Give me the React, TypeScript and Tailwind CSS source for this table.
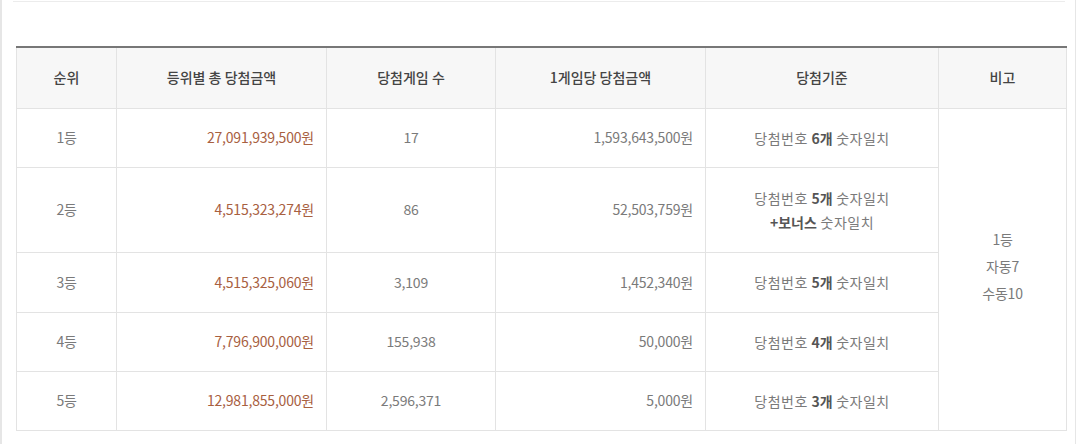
const rows = [
  { rank: "1등", total: "27,091,939,500원", games: "17", per: "1,593,643,500원", n: "6", bonus: false },
  { rank: "2등", total: "4,515,323,274원", games: "86", per: "52,503,759원", n: "5", bonus: true },
  { rank: "3등", total: "4,515,325,060원", games: "3,109", per: "1,452,340원", n: "5", bonus: false },
  { rank: "4등", total: "7,796,900,000원", games: "155,938", per: "50,000원", n: "4", bonus: false },
  { rank: "5등", total: "12,981,855,000원", games: "2,596,371", per: "5,000원", n: "3", bonus: false },
];

const heights = ["h-[59px]", "h-[85px]", "h-[60px]", "h-[59px]", "h-[59px]"];

export default function App() {
  return (
    <div
      className="w-[1080px] h-[444px] bg-white overflow-hidden"
      style={{ fontFamily: '"Noto Sans CJK KR", "Noto Sans", sans-serif' }}
    >
      <div className="w-[1076px] h-[444px] border-l-2 border-r border-[#e6e6e6]">
        <div className="ml-[11px] w-[1052px] h-[2px] border-b border-[#ececec]" />
        <div className="pl-[14px] pt-[44px]">
          <table className="w-[1050px] table-fixed border-collapse text-[14px] tracking-[-0.2px] text-[#7a7a7a]">
            <colgroup>
              <col className="w-[100px]" />
              <col className="w-[210px]" />
              <col className="w-[169px]" />
              <col className="w-[210px]" />
              <col className="w-[233px]" />
              <col className="w-[128px]" />
            </colgroup>
            <thead>
              <tr className="h-[61px] bg-[#f7f7f7] border-t-2 border-t-[#777] text-[#444]">
                <th className="border border-t-0 border-[#e3e3e3] font-medium tracking-normal">순위</th>
                <th className="border border-t-0 border-[#e3e3e3] font-medium tracking-normal">등위별 총 당첨금액</th>
                <th className="border border-t-0 border-[#e3e3e3] font-medium tracking-normal">당첨게임 수</th>
                <th className="border border-t-0 border-[#e3e3e3] font-medium tracking-normal">1게임당 당첨금액</th>
                <th className="border border-t-0 border-[#e3e3e3] font-medium tracking-normal">당첨기준</th>
                <th className="border border-t-0 border-[#e3e3e3] font-medium tracking-normal">비고</th>
              </tr>
            </thead>
            <tbody>
              {rows.map((r, i) => (
                <tr key={r.rank} className={heights[i]}>
                  <td className="border border-[#e3e3e3] text-center">{r.rank}</td>
                  <td className="border border-[#e3e3e3] text-right pr-[12px] text-[#a8603f]">{r.total}</td>
                  <td className="border border-[#e3e3e3] text-center">{r.games}</td>
                  <td className="border border-[#e3e3e3] text-right pr-[12px]">{r.per}</td>
                  <td className="border border-[#e3e3e3] text-center leading-[24px] tracking-[0.5px]">
                    당첨번호 <b className="font-bold text-[#555] tracking-normal">{r.n}개</b> 숫자일치
                    {r.bonus && (
                      <>
                        <br />
                        <b className="font-bold text-[#555] tracking-normal">+보너스</b> 숫자일치
                      </>
                    )}
                  </td>
                  {i === 0 && (
                    <td rowSpan={5} className="border border-[#e3e3e3] text-center leading-[27px] pb-[6px]">
                      1등
                      <br />
                      자동7
                      <br />
                      수동10
                    </td>
                  )}
                </tr>
              ))}
            </tbody>
          </table>
        </div>
      </div>
    </div>
  );
}
